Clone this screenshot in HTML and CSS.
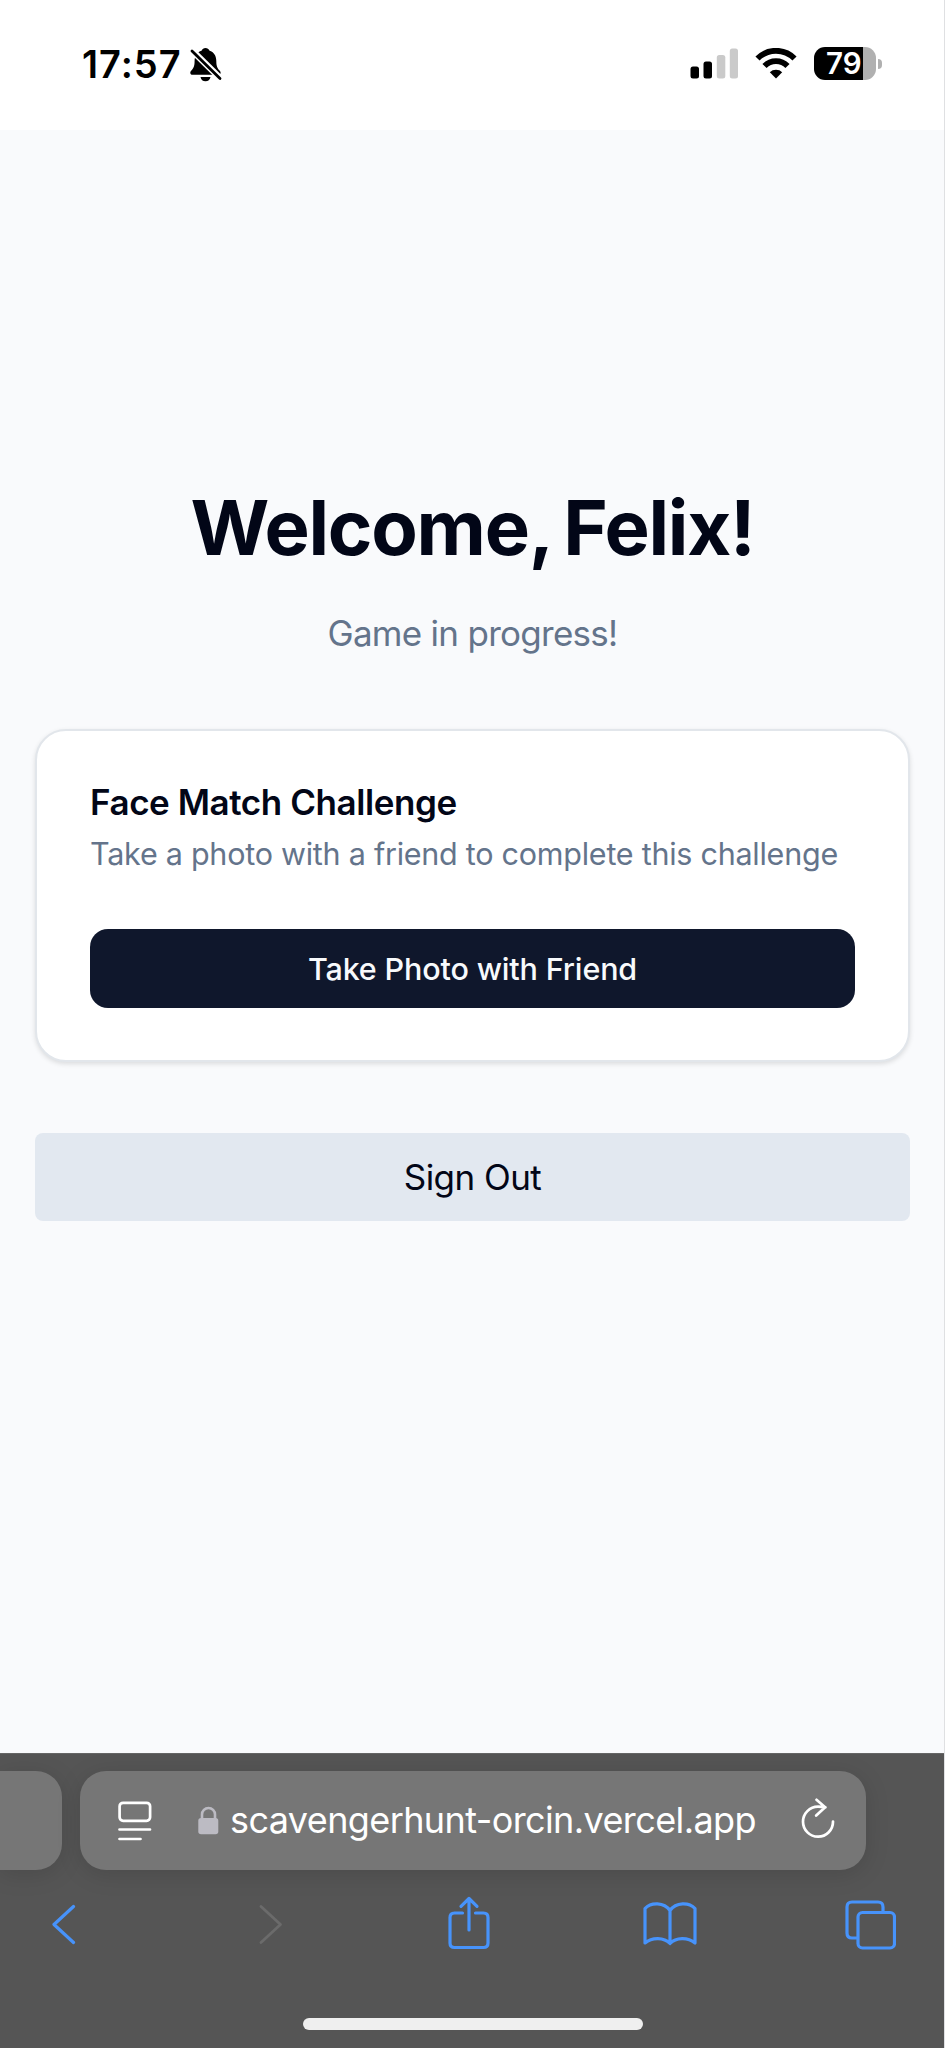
FILE: index.html
```html
<!DOCTYPE html>
<html lang="en">
<head>
<meta charset="utf-8">
<title>Scavenger Hunt</title>
<link rel="stylesheet" href="styles.css">
</head>
<body>
<div class="phone">
  <header class="status">
    <span class="time">17:57</span>
    <svg class="bell" width="32" height="34" viewBox="0 0 32 34">
      <path d="M15.500 0c-1.800 0-3.300 1-3.700 2.600C7 4.200 4.700 8 4.600 13c0 5.500-1.200 7.300-3.500 9.800-1.600 1.700-.8 4 1.400 4h26c2.200 0 2.800-2.300 1.300-4-2.300-2.500-3.500-4.300-3.500-9.800 0-5-2.300-8.800-7-10.400C18.900 1 17.300 0 15.500 0zM10.500 29h10c-.4 2.800-2.400 4.200-5 4.200s-4.600-1.400-5-4.200z" fill="#000"/>
      <path d="M1 1.500 31 31" stroke="#fff" stroke-width="6.500"/>
      <path d="M2 3 30 30.500" stroke="#000" stroke-width="2.800" stroke-linecap="round"/>
    </svg>
    <svg class="signal" width="48" height="31" viewBox="0 0 48 31">
      <rect x="0.500" y="18.500" width="8.500" height="12" rx="2.500"/>
      <rect x="13.500" y="13.500" width="8.500" height="17" rx="2.500"/>
      <rect class="off" x="26.800" y="7" width="8.500" height="23.500" rx="2.500"/>
      <rect class="off" x="39.800" y="0.500" width="8.200" height="30" rx="2.500"/>
    </svg>
    <svg class="wifi" width="42" height="31" viewBox="0 0 42 31">
      <path d="M2.500 10.500a26 26 0 0 1 37 0M9.500 18a16.200 16.200 0 0 1 23 0" fill="none" stroke="#000" stroke-width="5.800"/>
      <path d="M14.800 24.300a9 9 0 0 1 12.400 0L21 30.500z"/>
    </svg>
    <div class="battery"><span class="level">79</span></div>
    <span class="nub"></span>
  </header>

  <main class="page">
    <h1 class="title">Welcome, Felix!</h1>
    <p class="subtitle">Game in progress!</p>
    <section class="card">
      <h2 class="card-title">Face Match Challenge</h2>
      <p class="card-text">Take a photo with a friend to complete this challenge</p>
      <button class="primary"><span>Take Photo with Friend</span></button>
    </section>
    <button class="signout"><span>Sign Out</span></button>
  </main>

  <footer class="browser">
    <div class="tabs">
      <div class="tab-prev"></div>
      <div class="tab">
        <svg class="reader" width="34" height="41" viewBox="0 0 34 41" fill="none" stroke="#fff" stroke-width="2.700" stroke-linecap="round">
          <rect x="1.600" y="1.800" width="30.500" height="18" rx="3.500"/>
          <path d="M1.500 28.500h30.500M1.500 38h21"/>
        </svg>
        <svg class="lock" width="21" height="29" viewBox="0 0 21 29">
          <path d="M4 14V8.500a6.500 6.500 0 0 1 13 0V14" fill="none" stroke="#bcbbc3" stroke-width="2.600"/>
          <rect x="0.300" y="12" width="20" height="16.300" rx="2.800" fill="#bcbbc3"/>
        </svg>
        <span class="url">scavengerhunt-orcin.vercel.app</span>
        <svg class="reload" width="34" height="41" viewBox="0 0 34 41" fill="none" stroke="#fff" stroke-width="2.700" stroke-linecap="round" stroke-linejoin="round">
          <path d="M32 23.500A15 15 0 1 1 17 8.700q4 0 7.500.6M15.500 1.800l8.600 7.500-8.900 8.300"/>
        </svg>
      </div>
    </div>
    <nav class="tools">
      <svg width="24" height="42" viewBox="0 0 24 42"><path d="M21.500 2.500 2 20.500l19.500 18"/></svg>
      <svg class="disabled" width="24" height="42" viewBox="0 0 24 42"><path d="M2 2.500l19.500 18L2 38.500"/></svg>
      <svg class="share" width="42" height="54" viewBox="0 0 42 54"><path d="M14.500 17H6.500q-4.500 0-4.500 4.500v25.500q0 4.500 4.500 4.500h29q4.500 0 4.500-4.500V21.500q0-4.500-4.500-4.500h-8M21 34V3M13 10.300 21 2.500l8 7.800"/></svg>
      <svg class="book" width="54" height="44" viewBox="0 0 54 44"><path d="M27 8.500C21 0 8 0 2 6.500V41c7-6 19-6 25 .5 6-6.500 18-6.500 25-.5V6.500C46 0 33 0 27 8.500zM27 8.500V41"/></svg>
      <svg class="windows" width="51" height="50" viewBox="0 0 51 50"><path d="M11.500 38H7q-5 0-5-5V7q0-5 5-5h26q5 0 5 5v5"/><rect x="13" y="12.500" width="36.500" height="35.500" rx="4.500"/></svg>
    </nav>
    <div class="home"></div>
  </footer>
</div>
</body>
</html>
```
FILE: styles.css
```css
* { box-sizing: border-box; }
body { margin: 0; font-family: Inter, "Liberation Sans", sans-serif; background: #f9fafc; }
h1, h2, p { margin: 0; }
h1, h2, p, span { white-space: nowrap; }
button { border: 0; padding: 0; font-family: inherit; display: block; width: 100%; text-align: center; }
svg { display: block; flex: none; }

.phone { width: 945px; height: 2048px; display: flex; flex-direction: column; overflow: hidden; border-right: 1px solid #dfe0e2; }

.status { height: 130px; flex: none; background: #fff; display: flex; align-items: flex-start; padding: 47px 0 0 82px; }
.time { width: 108px; font-size: 38px; line-height: 35px; font-weight: 600; letter-spacing: 1px; color: #000; }
.bell { margin-top: 1px; margin-right: 468px; }
.signal { margin-top: 1px; margin-right: 17px; }
.signal .off { fill: #cacaca; }
.wifi { margin-top: 1px; margin-right: 17px; }
.battery { width: 62px; height: 33px; flex: none; border-radius: 11px; background: linear-gradient(90deg, #000 49px, #b0b0b0 49px); padding-left: 12px; }
.level { display: block; color: #fff; font-size: 29.500px; line-height: 33px; font-weight: 600; letter-spacing: 0; }
.nub { width: 4px; height: 10px; flex: none; margin: 12px 0 0 2px; border-radius: 0 4px 4px 0; background: #b0b0b0; }

.page { flex: 1; background: #f9fafc; padding: 357px 34px 0 35px; }
.title { font-size: 76px; line-height: 80px; font-weight: 700; letter-spacing: -1.250px; word-spacing: -4px; color: #020617; text-align: center; }
.subtitle { margin-top: 44px; font-size: 35px; line-height: 44px; letter-spacing: -0.720px; color: #64748b; text-align: center; }
.card { margin-top: 74px; height: 333px; padding: 49px 53px 0; background: #fff; border: 2px solid #e2e6eb; border-radius: 31px; box-shadow: 0 2px 5px rgba(0, 0, 0, 0.12); }
.card-title { font-size: 35px; line-height: 44px; font-weight: 600; letter-spacing: -0.430px; color: #020617; }
.card-text { margin-top: 10px; font-size: 30.500px; line-height: 40px; letter-spacing: -0.250px; color: #64748b; }
.primary { margin-top: 55px; height: 79px; border-radius: 18px; background: #0f172c; color: #f8fafc; font-size: 30.500px; font-weight: 500; letter-spacing: -0.150px; padding-bottom: 1px; }
.signout { margin-top: 71px; height: 88px; border-radius: 8px; background: #e2e8f0; color: #020617; font-size: 35px; letter-spacing: -0.550px; }

.browser { height: 295px; margin-right: -1px; flex: none; background: #555; border-top: 1px solid #666; padding-top: 17px; }
.tabs { display: flex; gap: 18px; height: 99px; }
.tab-prev { width: 62px; background: #767676; border-radius: 0 26px 26px 0; box-shadow: 0 4px 24px rgba(0, 0, 0, 0.13); }
.tab { width: 786px; background: #767676; border-radius: 26px; box-shadow: 0 4px 24px rgba(0, 0, 0, 0.13); display: flex; align-items: flex-start; padding: 0 0 0 38px; }
.reader { margin-top: 30px; }
.lock { margin: 35px 0 0 46px; }
.url { width: 570px; margin-left: 11px; font-size: 36px; line-height: 99px; letter-spacing: -0.600px; color: #fff; }
.reload { margin: 27px 0 0 1px; }

.tools { display: grid; grid-template-columns: 207px 188.500px 195.500px 202px 52px; align-items: start; height: 60px; margin-top: 26px; padding-left: 52px; }
.tools svg { margin-top: 8px; fill: none; stroke: #4793fb; stroke-width: 3.200; stroke-linecap: round; stroke-linejoin: round; }
.tools .disabled { stroke: #6b6b6b; stroke-width: 2.800; }
.tools .share { margin-top: 0; }
.tools .book { margin-top: 6px; }
.tools .windows { margin-top: 4px; }
.home { width: 340px; height: 12px; margin: 62px auto 0; border-radius: 6px; background: #efefef; }
```
